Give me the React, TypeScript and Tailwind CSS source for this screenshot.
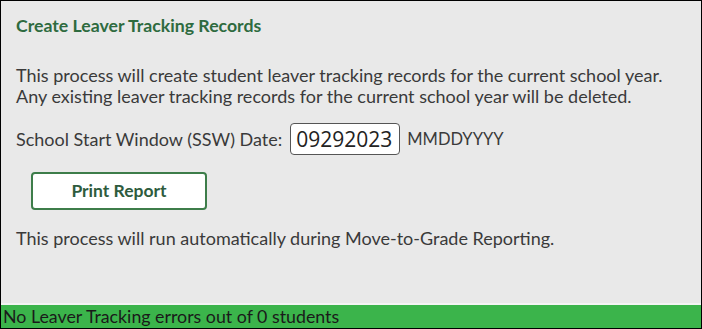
export default function App() {
  return (
    <div className="w-[702px] h-[329px] border border-black bg-[#e9e9e9] flex flex-col text-[18px] text-[#3a3a3a]" style={{ fontFamily: 'Lato, "Open Sans", sans-serif' }}>
      <div className="flex-1 px-[15px] pt-[14px]">
        {/* Title */}
        <h2 className="font-bold text-[#2e6b3f] text-[17.7px] leading-[22px]">Create Leaver Tracking Records</h2>

        <div className="mt-[28px] leading-[21px]">
          <p>This process will create student leaver tracking records for the current school year.</p>
          <p>Any existing leaver tracking records for the current school year will be deleted.</p>
        </div>

        {/* SSW date */}
        <div className="mt-[16px] flex items-center gap-[8px]">
          <span>School Start Window (SSW) Date:</span>
          <input
            type="text"
            defaultValue="09292023"
            className="w-[110px] h-[32px] px-[5px] rounded-[4px] border border-[#555] bg-white text-[21px] text-[#222] leading-none outline-none"
            style={{ fontFamily: '"Open Sans", sans-serif' }}
          />
          <span className="-ml-[1px] text-[16.5px]">MMDDYYYY</span>
        </div>

        <button className="mt-[17px] ml-[15px] w-[176px] h-[38px] rounded-[4px] border-2 border-[#3d7d4a] bg-white font-bold text-[17.5px] text-[#2e5b3d]">
          Print Report
        </button>

        <p className="mt-[18px] leading-[21px]">This process will run automatically during Move-to-Grade Reporting.</p>
      </div>

      {/* Status bar */}
      <div className="border-t-2 border-[#f4f4f4] bg-[#3bb44b] h-[25px] pl-[2px] flex items-center text-[17.8px] text-[#1a1a1a]">
        No Leaver Tracking errors out of 0 students
      </div>
    </div>
  );
}
